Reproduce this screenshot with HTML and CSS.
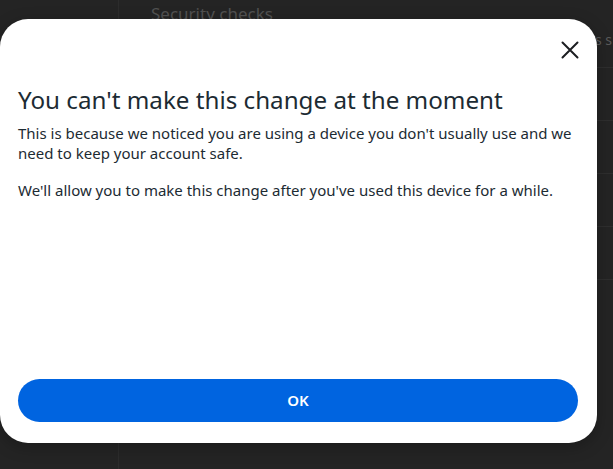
FILE: index.html
```html
<!DOCTYPE html>
<html lang="en">
<head>
<meta charset="utf-8">
<title>Security checks</title>
<link rel="stylesheet" href="styles.css">
</head>
<body>
<div class="page">
  <aside class="sidebar"></aside>
  <main class="main">
    <h2 class="page-title">Security checks</h2>
    <div class="page-sub"><span>s s</span></div>
    <ul class="rows">
      <li></li><li></li><li></li><li></li><li></li>
    </ul>
  </main>
</div>

<div class="modal" role="dialog" aria-modal="true">
  <button class="close" aria-label="Close">
    <svg width="18" height="18" viewBox="0 0 18 18"><path d="M1.5 1.5 L16.5 16.5 M16.5 1.5 L1.5 16.5" stroke="#1c1e21" stroke-width="2" stroke-linecap="round"/></svg>
  </button>
  <div class="content">
    <h1 class="title">You can't make this change at the moment</h1>
    <p class="text">This is because we noticed you are using a device you don't usually use and we need to keep your account safe.</p>
    <p class="text">We'll allow you to make this change after you've used this device for a while.</p>
  </div>
  <button class="ok">OK</button>
</div>
</body>
</html>
```
FILE: styles.css
```css
* { box-sizing: border-box; }
html, body { margin: 0; padding: 0; }
body {
  width: 613px;
  height: 469px;
  overflow: hidden;
  background: #232323;
  font-family: "Noto Sans", "Liberation Sans", Arial, sans-serif;
  position: relative;
}
.page {
  display: flex;
  height: 469px;
}
.sidebar {
  width: 119px;
  flex: none;
  background: #242424;
  border-right: 1px solid #2c2c2c;
}
.main {
  flex: 1;
  background: #242424;
  padding-left: 32px;
}
.page-title {
  margin: 0;
  padding-top: 4px;
  font-size: 17px;
  font-weight: 400;
  color: #515151;
  line-height: 20px;
}
.page-sub {
  display: flex;
  justify-content: flex-end;
  margin-top: 7px;
  padding-right: 1px;
  font-size: 14px;
  line-height: 18px;
  color: #5a5a5a;
}
.rows {
  list-style: none;
  margin: 6px 0 0 0;
  padding: 0;
}
.rows li {
  height: 53px;
  border-bottom: 1px solid #2e2e2e;
}
.rows li:first-child { height: 13px; }

.modal {
  position: absolute;
  left: 0;
  top: 19px;
  width: 597px;
  height: 424px;
  background: #fff;
  border-radius: 28px;
  box-shadow: 0 4px 16px rgba(0,0,0,0.25);
  display: flex;
  flex-direction: column;
  padding: 0 19px 21px 18px;
}
.close {
  position: absolute;
  top: 22px;
  right: 18px;
  width: 18px;
  height: 18px;
  padding: 0;
  border: 0;
  background: transparent;
  display: flex;
}
.content {
  flex: 1;
  padding-top: 66px;
  color: #1c2b33;
}
.title {
  margin: 0 0 8px 0;
  font-size: 24.2px;
  font-weight: 400;
  line-height: 30px;
  color: #1c2b33;
}
.text {
  margin: 0 0 17px 0;
  font-size: 15px;
  line-height: 20px;
  color: #1c2b33;
}
.ok {
  height: 43px;
  width: 100%;
  border: 0;
  border-radius: 22px;
  background: #0064e0;
  color: #fff;
  font-family: "Noto Sans", "Liberation Sans", Arial, sans-serif;
  font-size: 15px;
  font-weight: 600;
  padding-bottom: 2px;
}
```
